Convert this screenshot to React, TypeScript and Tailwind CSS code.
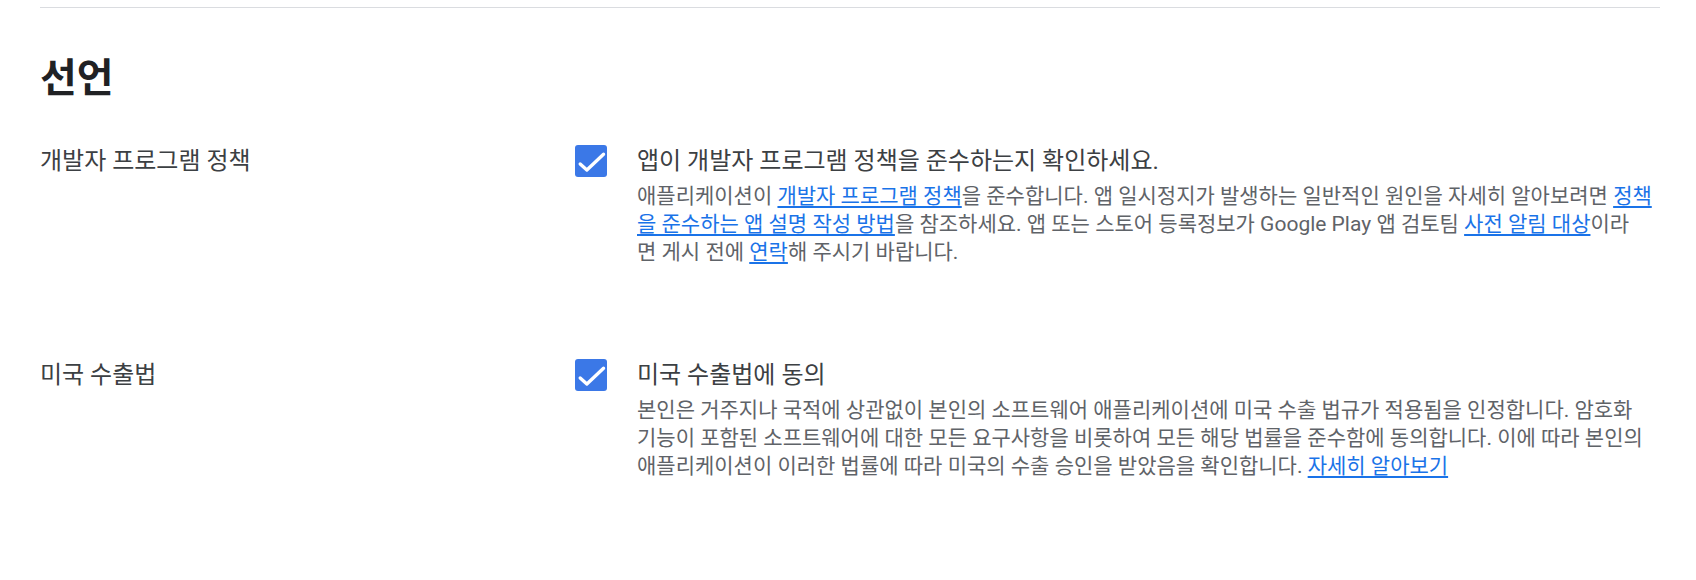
const FONT = { fontFamily: 'Roboto, "Noto Sans CJK KR", "Noto Sans", sans-serif' };

function Link({ children }: { children: React.ReactNode }) {
  return <a href="#" className="text-[#1a73e8] underline underline-offset-[3px]">{children}</a>;
}

function CheckedBox() {
  return (
    <div className="w-[32px] h-[32px] shrink-0 rounded-[3px] bg-[#3b78e7] flex items-center justify-center">
      <svg width="32" height="32" viewBox="0 0 24 24" fill="none">
        <polyline points="3.9,14.2 8.9,18.8 21.4,6.9" stroke="#fff" strokeWidth="2.5" strokeLinecap="round" strokeLinejoin="round" />
      </svg>
    </div>
  );
}

function Row({ label, title, children }: { label: string; title: string; children: React.ReactNode }) {
  return (
    <div className="flex">
      <div className="w-[535px] shrink-0 text-[24px] leading-[32px] text-[#3c4043]">{label}</div>
      <CheckedBox />
      <div className="ml-[30px] flex-1">
        <div className="text-[24px] leading-[32px] text-[#3c4043]">{title}</div>
        <p className="mt-[5px] text-[21px] leading-[28px] text-[#5f6368]">{children}</p>
      </div>
    </div>
  );
}

export default function App() {
  return (
    <div className="w-[1696px] h-[580px] bg-white pl-[40px] pr-[36px] pt-[7px]" style={FONT}>
      <div className="border-t border-[#dadce0]" />
      <h2 className="mt-[49px] text-[40px] leading-[44px] font-bold text-[#202124]">선언</h2>
      <div className="mt-[44px] flex flex-col gap-[93px]">
        <Row label="개발자 프로그램 정책" title="앱이 개발자 프로그램 정책을 준수하는지 확인하세요.">
          애플리케이션이 <Link>개발자 프로그램 정책</Link>을 준수합니다. 앱 일시정지가 발생하는 일반적인 원인을 자세히 알아보려면{" "}
          <Link>정책<br />을 준수하는 앱 설명 작성 방법</Link>을 참조하세요. 앱 또는 스토어 등록정보가 Google Play 앱 검토팀{" "}
          <Link>사전 알림 대상</Link>이라<br />면 게시 전에 <Link>연락</Link>해 주시기 바랍니다.
        </Row>
        <Row label="미국 수출법" title="미국 수출법에 동의">
          본인은 거주지나 국적에 상관없이 본인의 소프트웨어 애플리케이션에 미국 수출 법규가 적용됨을 인정합니다. 암호화
          <br />
          기능이 포함된 소프트웨어에 대한 모든 요구사항을 비롯하여 모든 해당 법률을 준수함에 동의합니다. 이에 따라 본인의
          <br />
          애플리케이션이 이러한 법률에 따라 미국의 수출 승인을 받았음을 확인합니다. <Link>자세히 알아보기</Link>
        </Row>
      </div>
    </div>
  );
}
